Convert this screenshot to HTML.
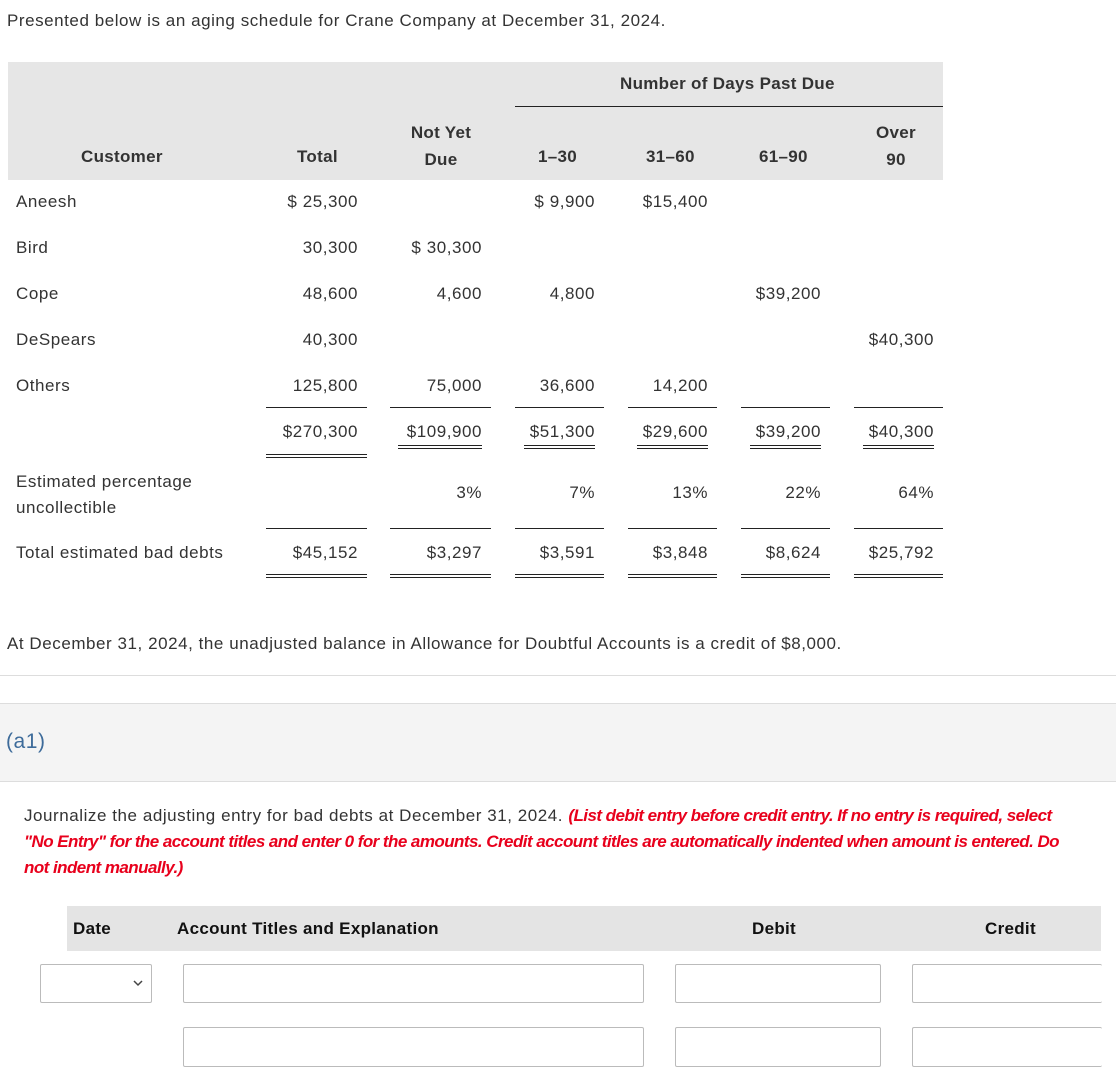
<!DOCTYPE html>
<html><head><style>
body{margin:0;width:1116px;height:1084px;background:#fff;font-family:"Liberation Sans",sans-serif;font-size:17px;letter-spacing:0.55px;color:#333;position:relative;overflow:hidden}
.a{position:absolute;white-space:nowrap}
.r{position:absolute;text-align:right;white-space:nowrap}
.l1{position:absolute;height:0;border-top:1.5px solid #222}
.l2{position:absolute;height:2px;border-top:1.5px solid #222;border-bottom:1.5px solid #222}
.b{font-weight:bold;letter-spacing:0.3px}
.inp{position:absolute;border:1px solid #bbb;border-radius:2px;background:#fff;box-sizing:border-box}
</style></head><body>
<div class="a" style="left:7px;top:11px">Presented below is an aging schedule for Crane Company at December 31, 2024.</div>
<div class="a" style="left:8px;top:62px;width:935px;height:118px;background:#e6e6e6"></div>
<div class="a b" style="left:620px;top:74px">Number of Days Past Due</div>
<div class="l1" style="left:515px;top:106px;width:428px"></div>
<div class="a b" style="left:81px;top:147px">Customer</div>
<div class="a b" style="left:297px;top:147px">Total</div>
<div class="a b" style="left:405px;top:119px;text-align:center;width:72px;line-height:27px">Not Yet<br>Due</div>
<div class="a b" style="left:538px;top:147px">1–30</div>
<div class="a b" style="left:646px;top:147px">31–60</div>
<div class="a b" style="left:759px;top:147px">61–90</div>
<div class="a b" style="left:876px;top:119px;text-align:center;line-height:27px">Over<br>90</div>

<div class="a" style="left:16px;top:179px;line-height:46px">Aneesh<br>Bird<br>Cope<br>DeSpears<br>Others</div>
<div class="r" style="right:758px;top:179px;line-height:46px">$ 25,300<br>30,300<br>48,600<br>40,300<br>125,800<br>$270,300</div>
<div class="r" style="right:634px;top:179px;line-height:46px"><br>$ 30,300<br>4,600<br><br>75,000<br>$109,900</div>
<div class="r" style="right:521px;top:179px;line-height:46px">$ 9,900<br><br>4,800<br><br>36,600<br>$51,300</div>
<div class="r" style="right:408px;top:179px;line-height:46px">$15,400<br><br><br><br>14,200<br>$29,600</div>
<div class="r" style="right:295px;top:179px;line-height:46px"><br><br>$39,200<br><br><br>$39,200</div>
<div class="r" style="right:182px;top:179px;line-height:46px"><br><br><br>$40,300<br><br>$40,300</div>

<div class="l1" style="left:266px;top:407px;width:101px"></div>
<div class="l1" style="left:390px;top:407px;width:101px"></div>
<div class="l1" style="left:515px;top:407px;width:89px"></div>
<div class="l1" style="left:628px;top:407px;width:89px"></div>
<div class="l1" style="left:741px;top:407px;width:89px"></div>
<div class="l1" style="left:854px;top:407px;width:89px"></div>
<div class="l2" style="left:266px;top:454px;width:101px"></div>
<div class="l2" style="left:398px;top:445px;width:84px"></div>
<div class="l2" style="left:524px;top:445px;width:71px"></div>
<div class="l2" style="left:637px;top:445px;width:71px"></div>
<div class="l2" style="left:750px;top:445px;width:71px"></div>
<div class="l2" style="left:863px;top:445px;width:71px"></div>

<div class="a" style="left:16px;top:469px;line-height:26px">Estimated percentage<br>uncollectible</div>
<div class="r" style="right:634px;top:483px">3%</div>
<div class="r" style="right:521px;top:483px">7%</div>
<div class="r" style="right:408px;top:483px">13%</div>
<div class="r" style="right:295px;top:483px">22%</div>
<div class="r" style="right:182px;top:483px">64%</div>

<div class="l1" style="left:266px;top:528px;width:101px"></div>
<div class="l1" style="left:390px;top:528px;width:101px"></div>
<div class="l1" style="left:515px;top:528px;width:89px"></div>
<div class="l1" style="left:628px;top:528px;width:89px"></div>
<div class="l1" style="left:741px;top:528px;width:89px"></div>
<div class="l1" style="left:854px;top:528px;width:89px"></div>
<div class="a" style="left:16px;top:543px">Total estimated bad debts</div>
<div class="r" style="right:758px;top:543px">$45,152</div>
<div class="r" style="right:634px;top:543px">$3,297</div>
<div class="r" style="right:521px;top:543px">$3,591</div>
<div class="r" style="right:408px;top:543px">$3,848</div>
<div class="r" style="right:295px;top:543px">$8,624</div>
<div class="r" style="right:182px;top:543px">$25,792</div>
<div class="l2" style="left:266px;top:574px;width:101px"></div>
<div class="l2" style="left:390px;top:574px;width:101px"></div>
<div class="l2" style="left:515px;top:574px;width:89px"></div>
<div class="l2" style="left:628px;top:574px;width:89px"></div>
<div class="l2" style="left:741px;top:574px;width:89px"></div>
<div class="l2" style="left:854px;top:574px;width:89px"></div>

<div class="a" style="left:7px;top:634px">At December 31, 2024, the unadjusted balance in Allowance for Doubtful Accounts is a credit of $8,000.</div>
<div class="a" style="left:0;top:675px;width:1116px;border-top:1px solid #ddd"></div>
<div class="a" style="left:0;top:703px;width:1116px;height:77px;background:#f4f4f4;border-top:1px solid #ddd;border-bottom:1px solid #ddd"></div>
<div class="a" style="left:6px;top:730px;font-size:21px;color:#3d6b9a">(a1)</div>
<div class="a" style="left:24px;top:803px;line-height:26px">Journalize the adjusting entry for bad debts at December 31, 2024. <i class="b" style="color:#e8001c;letter-spacing:-0.55px">(List debit entry before credit entry. If no entry is required, select<br>"No Entry" for the account titles and enter 0 for the amounts. Credit account titles are automatically indented when amount is entered. Do<br>not indent manually.)</i></div>
<div class="a" style="left:67px;top:906px;width:1034px;height:45px;background:#e4e4e4"></div>
<div class="a b" style="left:73px;top:919px;color:#111">Date</div>
<div class="a b" style="left:177px;top:919px;color:#111">Account Titles and Explanation</div>
<div class="a b" style="left:752px;top:919px;color:#111">Debit</div>
<div class="a b" style="left:985px;top:919px;color:#111">Credit</div>
<div class="inp" style="left:40px;top:964px;width:112px;height:39px"><svg style="position:absolute;left:92px;top:15px" width="10" height="7"><path d="M1 1L5 5L9 1" fill="none" stroke="#444" stroke-width="1.5"/></svg></div>
<div class="inp" style="left:183px;top:964px;width:461px;height:39px"></div>
<div class="inp" style="left:675px;top:964px;width:206px;height:39px"></div>
<div class="inp" style="left:912px;top:964px;width:190px;height:39px;border-right:none"></div>
<div class="inp" style="left:183px;top:1027px;width:461px;height:40px"></div>
<div class="inp" style="left:675px;top:1027px;width:206px;height:40px"></div>
<div class="inp" style="left:912px;top:1027px;width:190px;height:40px;border-right:none"></div>
</body></html>
